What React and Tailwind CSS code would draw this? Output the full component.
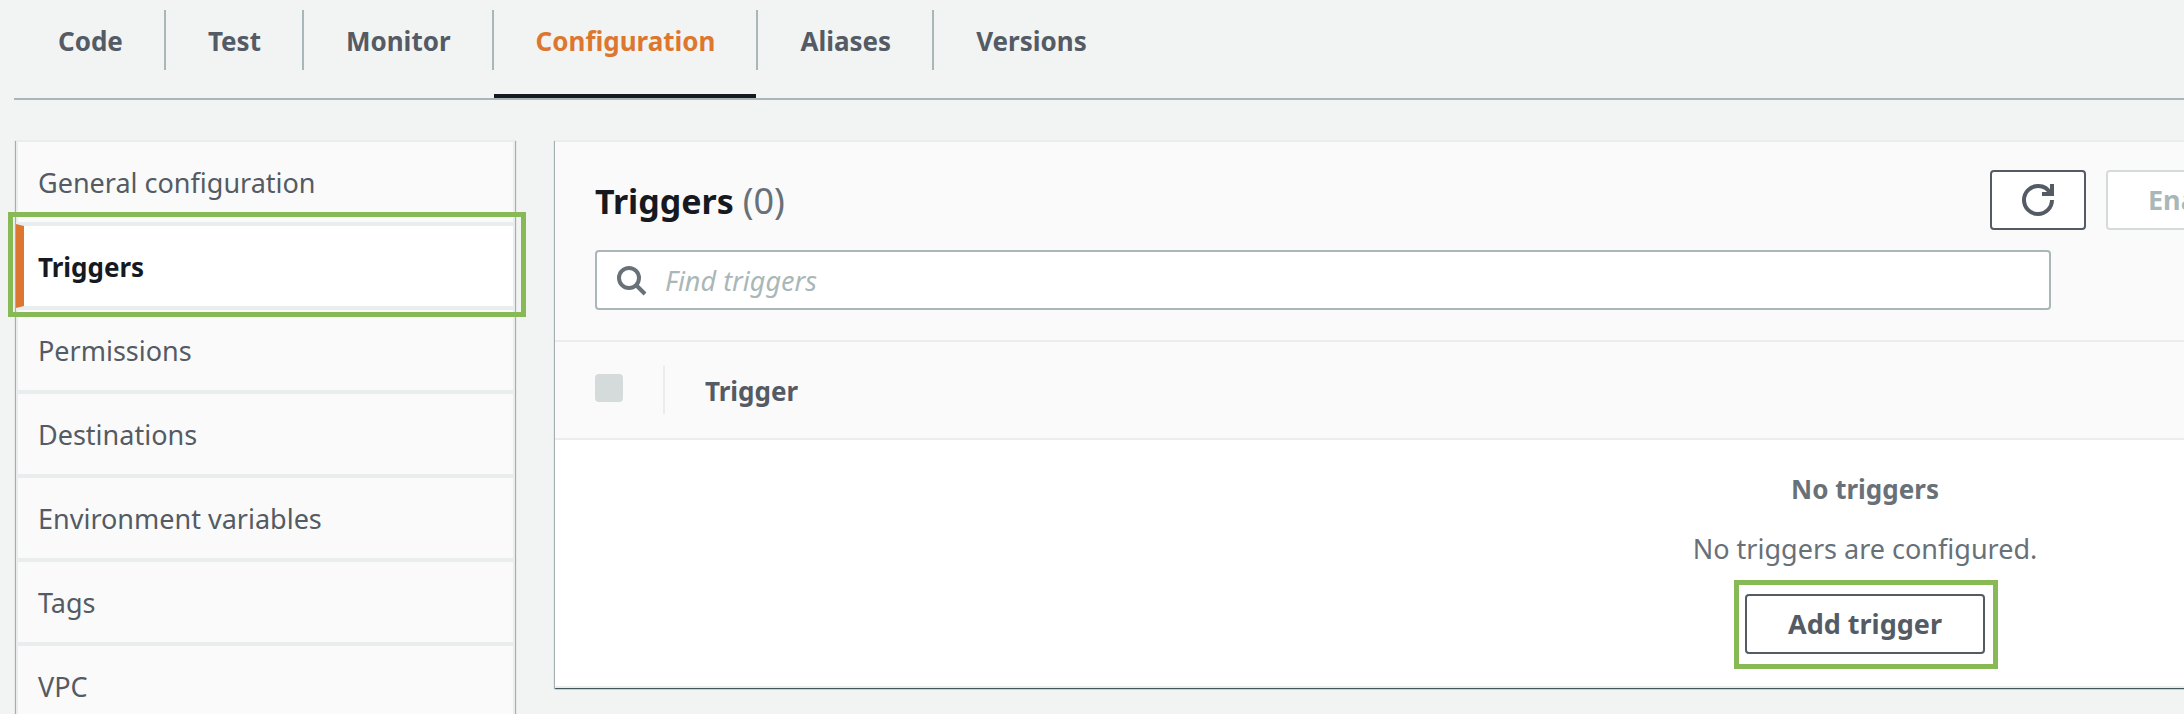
const tabs = ["Code", "Test", "Monitor", "Configuration", "Aliases", "Versions"];
const activeTab = "Configuration";

const sections = [
  "General configuration",
  "Triggers",
  "Permissions",
  "Destinations",
  "Environment variables",
  "Tags",
  "VPC",
];
const activeSection = "Triggers";

const panelShadow =
  "shadow-[0_1px_1px_0_rgba(0,28,36,0.5),1px_1px_1px_0_rgba(0,28,36,0.25),-1px_1px_1px_0_rgba(0,28,36,0.25)]";

function RefreshIcon() {
  return (
    <svg viewBox="0 0 16 16" className="size-8" fill="none" stroke="currentColor" strokeWidth="2" aria-hidden="true">
      <path d="M10 5h5V0" />
      <path d="M15 8a7 7 0 1 1-14 0 7 7 0 0 1 7-7 6.87 6.87 0 0 1 6.3 4" />
    </svg>
  );
}

function SearchIcon() {
  return (
    <svg viewBox="0 0 16 16" className="size-8 shrink-0 text-[#687078]" fill="none" stroke="currentColor" strokeWidth="2" aria-hidden="true">
      <circle cx="7" cy="7" r="5" />
      <path d="m15 15-4.5-4.5" />
    </svg>
  );
}

function Tabs() {
  return (
    <nav className="ml-3.5 border-b-2 border-[#aab7b8] pt-2.5">
      <ul className="flex pl-0.5 text-[26px] font-bold">
        {tabs.map((tab) => (
          <li key={tab} className="group flex h-[88px] flex-col justify-between">
            <a
              href="#"
              aria-current={tab === activeTab ? "page" : undefined}
              className="flex h-[60px] items-center border-r-2 border-[#aab7b8] pt-0.5 pr-[41px] pl-[42px] text-[#545b64] group-last:border-r-0 aria-[current=page]:text-[#dd7730]"
            >
              {tab}
            </a>
            {tab === activeTab && <span className="mr-0.5 h-1 bg-[#16191f]" />}
          </li>
        ))}
      </ul>
    </nav>
  );
}

function SideNav() {
  return (
    <nav className={"w-[499px] shrink-0 self-start bg-[#fafafa] " + panelShadow}>
      <ul>
        {sections.map((name) =>
          name === activeSection ? (
            <li key={name} className="relative">
              <a
                href="#"
                aria-current="page"
                className="flex h-[84px] items-center border-2 border-l-8 border-[#eaeded] border-l-[#dd7730] bg-white pt-0.5 pl-3.5 text-[26px] font-bold text-[#16191f]"
              >
                {name}
              </a>
              <span className="pointer-events-none absolute -top-3 -right-[11px] -bottom-[9px] -left-2 z-10 border-5 border-[#87b955]" />
            </li>
          ) : (
            <li key={name}>
              <a href="#" className="flex h-[84px] items-center border-2 border-[#eaeded] pt-0.5 pl-5 text-[27px] text-[#545b64]">
                {name}
              </a>
            </li>
          )
        )}
      </ul>
    </nav>
  );
}

function TriggersPanel() {
  return (
    <section className={"min-w-[2620px] flex-1 self-start border-y-2 border-[#eaeded] bg-white " + panelShadow}>
      <header className="border-b-2 border-[#eaeded] bg-[#fafafa] pt-7 pb-[30px] pl-10">
        <div className="flex w-[calc(100vw-595px)] items-center justify-between">
          <h2 className="pt-0.5 text-[34px] font-bold text-[#16191f]">
            Triggers <span className="text-[36px] font-normal text-[#687078]">(0)</span>
          </h2>
          <div className="flex w-[194px] gap-5 text-[27px] font-bold">
            <button
              type="button"
              aria-label="Refresh"
              className="flex h-[60px] w-24 shrink-0 items-center justify-center rounded-sm border-2 border-[#545b64] bg-white text-[#545b64]"
            >
              <RefreshIcon />
            </button>
            <button
              type="button"
              disabled
              className="h-[60px] shrink-0 rounded-sm border-2 border-[#d5dbdb] bg-white px-10 text-[#aab7b8]"
            >
              Enable
            </button>
          </div>
        </div>
        <label className="mt-5 flex h-[60px] w-[calc(100vw-728px)] items-center gap-[18px] rounded-sm border-2 border-[#aab7b8] bg-white px-[18px]">
          <SearchIcon />
          <input
            type="text"
            aria-label="Find triggers"
            placeholder="Find triggers"
            className="h-full min-w-0 flex-1 bg-transparent text-[27px] text-[#16191f] outline-none placeholder:text-[#aab7b8] placeholder:italic"
          />
        </label>
      </header>
      <table className="w-full border-collapse">
        <thead>
          <tr className="h-24 bg-[#fafafa]">
            <th className="w-[110px] p-0">
              <div className="flex h-12 items-center border-r-2 border-[#eaeded] pl-10">
                <input
                  type="checkbox"
                  disabled
                  aria-label="Select all triggers"
                  className="mb-1 size-7 appearance-none rounded-sm bg-[#d5dbdb]"
                />
              </div>
            </th>
            <th className="p-0 pt-0.5 pl-10 text-left text-[26px] font-bold text-[#545b64]">Trigger</th>
          </tr>
        </thead>
        <tbody>
          <tr>
            <td colSpan={2} className="p-0">
              <div className="flex flex-col items-center border-t-2 border-[#eaeded] pt-[29px] pb-8 text-[#687078]">
                <p className="text-[26px] leading-10 font-bold">No triggers</p>
                <p className="mt-5 text-[27px] leading-10">No triggers are configured.</p>
                <div className="relative mt-[25px]">
                  <button
                    type="button"
                    className="h-[60px] w-60 rounded-sm border-2 border-[#545b64] bg-white text-[27px] font-bold text-[#545b64]"
                  >
                    Add trigger
                  </button>
                  <span className="pointer-events-none absolute -top-3.5 -right-[13px] -bottom-[15px] -left-[11px] border-5 border-[#87b955]" />
                </div>
              </div>
            </td>
          </tr>
        </tbody>
      </table>
    </section>
  );
}

export default function App() {
  return (
    <div className="h-screen overflow-hidden bg-[#f2f4f3] font-['Noto_Sans',sans-serif]">
      <Tabs />
      <main className="flex gap-10 pt-10 pl-4">
        <SideNav />
        <TriggersPanel />
      </main>
    </div>
  );
}
